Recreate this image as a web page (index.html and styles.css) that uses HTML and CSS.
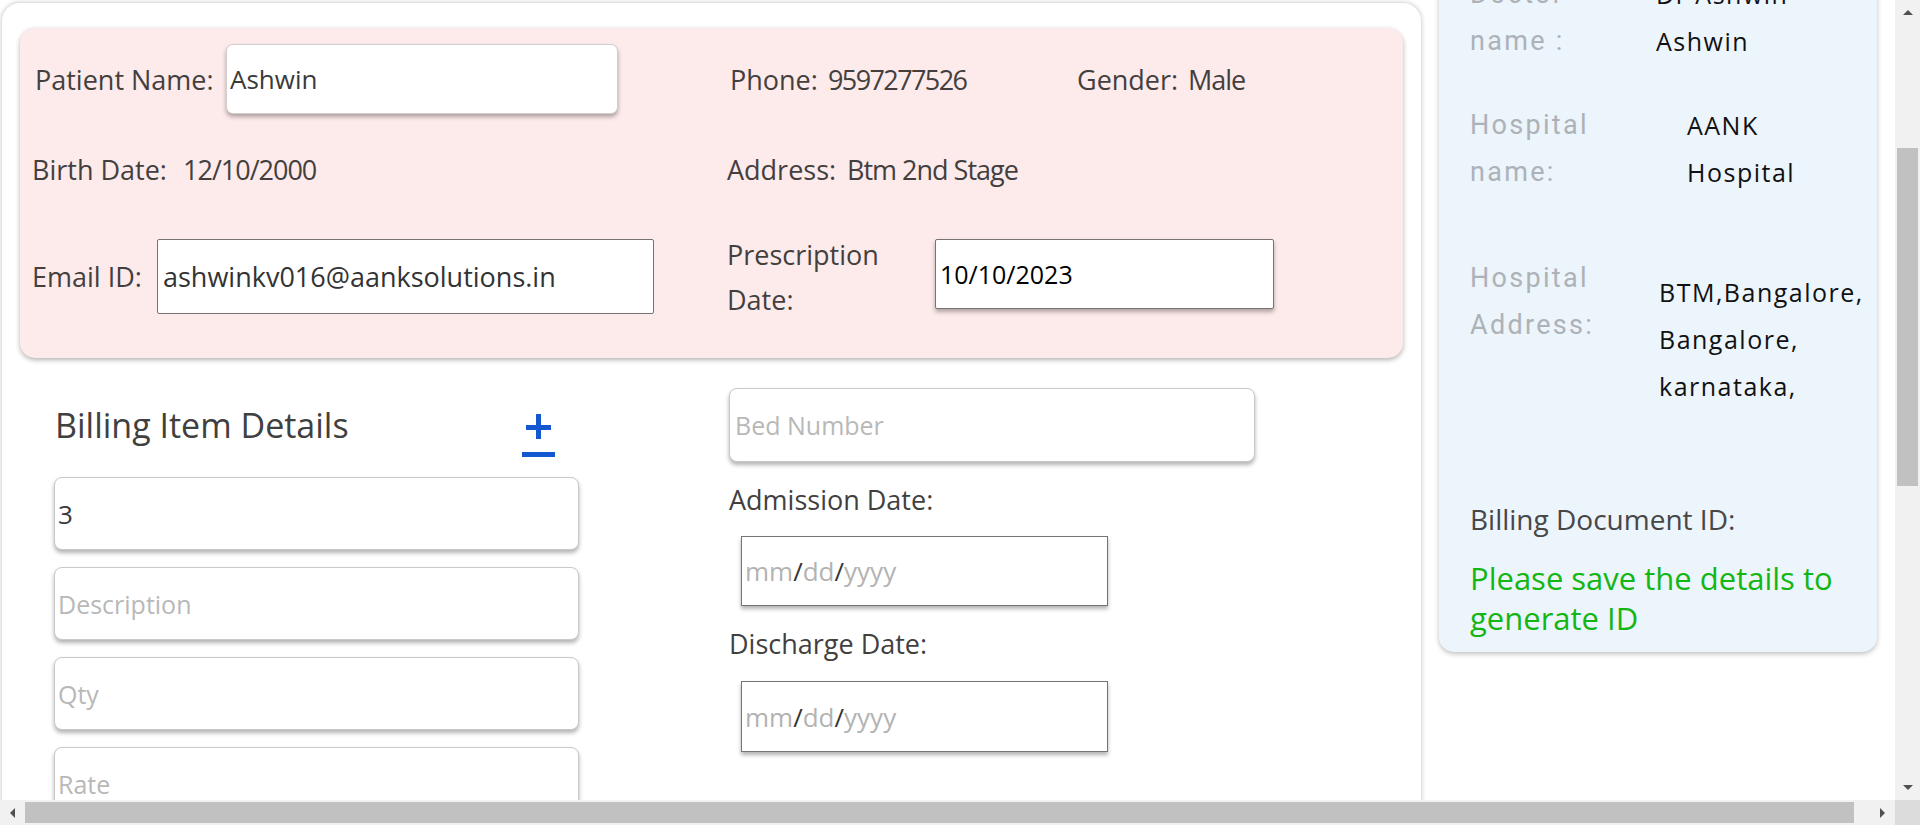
FILE: index.html
```html
<!DOCTYPE html>
<html lang="en">
<head>
<meta charset="utf-8">
<title>Billing Details</title>
<link rel="stylesheet" href="styles.css">
</head>
<body>
<div class="screen">
  <div class="viewport">
    <div class="page">
      <main class="card">
        <section class="patient">
          <div class="prow prow-1">
            <div class="pcell pcell-left">
              <div class="field f-name">
                <span class="lbl w-name">Patient Name:</span>
                <input class="soft-input name-input" type="text" value="Ashwin">
              </div>
            </div>
            <div class="pcell">
              <div class="field f-phone">
                <span class="lbl w-phone">Phone:</span>
                <span class="val val-phone">9597277526</span>
              </div>
              <div class="field">
                <span class="lbl w-gender">Gender:</span>
                <span class="val">Male</span>
              </div>
            </div>
          </div>
          <div class="prow prow-2">
            <div class="pcell pcell-left">
              <div class="field">
                <span class="lbl w-birth">Birth Date:</span>
                <span class="val">12/10/2000</span>
              </div>
            </div>
            <div class="pcell">
              <div class="field">
                <span class="lbl w-address">Address:</span>
                <span class="val">Btm 2nd Stage</span>
              </div>
            </div>
          </div>
          <div class="prow prow-3">
            <div class="pcell pcell-left">
              <div class="field">
                <span class="lbl w-email">Email ID:</span>
                <input class="line-input email-input" type="text" value="ashwinkv016@aanksolutions.in">
              </div>
            </div>
            <div class="pcell">
              <div class="field">
                <span class="lbl lbl-wrap w-presc">Prescription Date:</span>
                <input class="line-input presc-input" type="text" value="10/10/2023">
              </div>
            </div>
          </div>
        </section>

        <section class="billing">
          <div class="items">
            <div class="items-head">
              <h2 class="items-title">Billing Item Details</h2>
              <svg class="plus-icon" width="34" height="45" viewBox="0 0 34 45" aria-label="Add item">
                <rect x="4" y="12" width="25" height="5" fill="#1358d0"/>
                <rect x="14" y="1" width="5" height="25" fill="#1358d0"/>
                <rect x="0" y="39" width="33" height="5" fill="#1358d0"/>
              </svg>
            </div>
            <input class="soft-input item-input item-first" type="text" value="3">
            <input class="soft-input item-input" type="text" placeholder="Description">
            <input class="soft-input item-input" type="text" placeholder="Qty">
            <input class="soft-input item-input" type="text" placeholder="Rate">
          </div>
          <div class="stay">
            <input class="soft-input bed-input" type="text" placeholder="Bed Number">
            <div class="date-label">Admission Date:</div>
            <div class="date-box"><span class="ph">mm</span>/<span class="ph">dd</span>/<span class="ph">yyyy</span></div>
            <div class="date-label">Discharge Date:</div>
            <div class="date-box date-box-2"><span class="ph">mm</span>/<span class="ph">dd</span>/<span class="ph">yyyy</span></div>
          </div>
        </section>
      </main>

      <aside class="info">
        <div class="info-row">
          <div class="info-label">Doctor name :</div>
          <div class="info-value v-doctor">Dr Ashwin Ashwin</div>
        </div>
        <div class="info-row r-hosp">
          <div class="info-label">Hospital name:</div>
          <div class="info-value v-hosp">AANK Hospital</div>
        </div>
        <div class="info-row r-addr">
          <div class="info-label">Hospital Address:</div>
          <div class="info-value v-addr">BTM,Bangalore, Bangalore, karnataka,</div>
        </div>
        <div class="doc-id">Billing Document ID:</div>
        <div class="doc-note">Please save the details to generate ID</div>
      </aside>
    </div>
  </div>

  <div class="vscroll">
    <div class="sb-btn"><span class="arr arr-up"></span></div>
    <div class="vtrack"><div class="vthumb"></div></div>
    <div class="sb-btn"><span class="arr arr-down"></span></div>
  </div>
  <div class="hscroll">
    <div class="sb-btn"><span class="arr arr-left"></span></div>
    <div class="htrack"><div class="hthumb"></div></div>
    <div class="sb-btn"><span class="arr arr-right"></span></div>
  </div>
  <div class="corner"></div>
</div>
</body>
</html>
```

FILE: styles.css
```css
* { box-sizing: border-box; }

html, body {
  margin: 0;
  padding: 0;
  background: #fff;
}

body {
  font-family: "Open Sans", "Noto Sans", sans-serif;
  color: #433f3f;
  overflow: hidden;
}

/* ---------- window frame with scrollbars ---------- */
.screen {
  display: grid;
  grid-template-columns: 1fr 25px;
  grid-template-rows: 1fr 25px;
  width: 1920px;
  height: 825px;
}

.viewport {
  overflow: hidden;
  background: #fff;
}

.vscroll {
  background: #f1f1f1;
  display: flex;
  flex-direction: column;
}

.hscroll {
  background: #f1f1f1;
  display: flex;
}

.sb-btn {
  flex: none;
  width: 25px;
  height: 25px;
  display: flex;
  align-items: center;
  justify-content: center;
}

.vtrack {
  flex: 1;
  padding: 0 2px;
}

.vthumb {
  margin-top: 123px;
  height: 338px;
  background: #c1c1c1;
}

.htrack {
  flex: 1;
  padding: 2px 0;
}

.hthumb {
  width: 1829px;
  height: 100%;
  background: #c1c1c1;
}

.corner { background: #dcdcdc; }

.arr { width: 0; height: 0; }
.arr-up { border-left: 5px solid transparent; border-right: 5px solid transparent; border-bottom: 5px solid #505050; }
.arr-down { border-left: 5px solid transparent; border-right: 5px solid transparent; border-top: 5px solid #505050; }
.arr-left { border-top: 5px solid transparent; border-bottom: 5px solid transparent; border-right: 5px solid #505050; }
.arr-right { border-top: 5px solid transparent; border-bottom: 5px solid transparent; border-left: 5px solid #505050; }

/* ---------- page ---------- */
.page {
  display: flex;
  align-items: flex-start;
  gap: 18px;
  padding: 3px 0 0 2px;
}

.card {
  flex: none;
  width: 1419px;
  min-height: 900px;
  background: #fff;
  border-radius: 18px;
  box-shadow: 0 0 5px rgba(0, 0, 0, 0.28);
  padding: 25px 18px 0;
}

/* ---------- patient block ---------- */
.patient {
  background: #fdeaea;
  border-radius: 15px;
  box-shadow: 0 2px 5px rgba(0, 0, 0, 0.3);
  height: 330px;
  padding: 16px 0 0 12px;
}

.prow { display: flex; align-items: center; }
.prow-1, .prow-2 { height: 70px; }
.prow-2 { margin-top: 20px; }
.prow-3 { height: 75px; margin-top: 35px; }

.pcell { display: flex; align-items: center; height: 100%; }
.pcell-left { width: 695px; flex: none; }

.field { display: flex; align-items: center; height: 100%; }
.f-name { margin-left: 3px; }
.f-phone { margin-left: 3px; width: 347px; }

.lbl, .val {
  font-size: 27px;
  white-space: nowrap;
  color: #433f3f;
}

.val { letter-spacing: -1px; }
.val-phone { letter-spacing: -1.6px; }

.lbl { flex: none; }
.w-name { width: 191px; }
.w-phone { width: 98px; }
.w-gender { width: 111px; }
.w-birth { width: 151px; }
.w-address { width: 120px; }
.w-email { width: 125px; }
.w-presc { width: 208px; }

.lbl-wrap {
  white-space: normal;
  line-height: 45px;
  padding-right: 20px;
}

/* ---------- inputs ---------- */
input {
  font-family: "Open Sans", "Noto Sans", sans-serif;
  margin: 0;
  outline: none;
}

input::placeholder { color: #b8b8b8; }

.soft-input {
  display: block;
  background: #fff;
  border: 1px solid #d3cdcd;
  border-radius: 7px;
  box-shadow: 0 3px 4px rgba(0, 0, 0, 0.3);
  padding: 0 3px;
  font-size: 26px;
  color: #3a3a3a;
}

.name-input { width: 392px; height: 70px; }

.line-input {
  display: block;
  background: #fff;
  border: 1px solid #777373;
  border-radius: 2px;
  font-size: 27px;
  color: #333;
  padding: 0 5px;
}

.email-input { width: 497px; height: 75px; }

.presc-input {
  width: 339px;
  height: 70px;
  margin-bottom: 5px;
  font-size: 25px;
  color: #000;
  padding: 0 4px;
  box-shadow: 0 3px 4px rgba(0, 0, 0, 0.3);
}

/* ---------- billing ---------- */
.billing { display: flex; }

.items {
  flex: none;
  width: 709px;
  padding-left: 34px;
}

.items-head {
  display: flex;
  align-items: flex-start;
  margin-top: 44px;
  height: 46px;
}

.items-title {
  margin: 0;
  width: 468px;
  padding-left: 1px;
  font-size: 34px;
  font-weight: 500;
  line-height: 46px;
  color: #404040;
  white-space: nowrap;
}

.plus-icon { flex: none; margin-top: 11px; }

.item-input {
  width: 525px;
  height: 73px;
  margin-top: 17px;
  font-size: 25px;
  border-color: #c9c9c9;
  border-radius: 8px;
}

.item-first { margin-top: 29px; font-size: 26px; }

.stay { flex: 1; }

.bed-input {
  width: 526px;
  height: 74px;
  margin-top: 30px;
  font-size: 25px;
  padding: 0 5px;
  border-color: #c9c9c9;
  border-radius: 8px;
}

.date-label {
  margin-top: 19px;
  font-size: 27px;
  color: #433f3f;
}

.date-box {
  display: flex;
  align-items: center;
  width: 367px;
  height: 70px;
  margin: 18px 0 0 12px;
  padding: 0 3px;
  background: #fff;
  border: 1px solid #777373;
  box-shadow: 0 3px 4px rgba(0, 0, 0, 0.3);
  font-size: 26px;
  color: #333;
}

.date-box .ph { color: #b3b3b3; }
.date-box-2 { height: 71px; margin-top: 19px; }

/* ---------- info panel ---------- */
.info {
  flex: none;
  width: 438px;
  margin-top: -63px;
  background: #ecf4fc;
  border-radius: 0 0 15px 15px;
  box-shadow: 0 2px 5px rgba(0, 0, 0, 0.25);
  padding: 31px 14px 14px 31px;
}

.info-row { display: flex; align-items: flex-start; }
.r-hosp { margin-top: 37px; }
.r-addr { margin-top: 59px; }

.info-label {
  flex: none;
  width: 160px;
  font-family: Roboto, "Open Sans", sans-serif;
  font-size: 27px;
  letter-spacing: 2.3px;
  line-height: 47px;
  color: #adb2b7;
}

.info-value {
  flex: 1;
  min-width: 0;
  font-size: 25px;
  letter-spacing: 1.5px;
  line-height: 47px;
  color: #111;
}

.v-doctor { margin-left: 26px; }
.v-hosp { margin-left: 57px; }
.v-addr { margin-left: 29px; margin-top: 14px; }

.doc-id {
  margin-top: 90px;
  font-size: 28px;
  font-weight: 500;
  color: #474747;
}

.doc-note {
  margin-top: 20px;
  font-size: 31px;
  line-height: 40px;
  color: #14b614;
}
```
